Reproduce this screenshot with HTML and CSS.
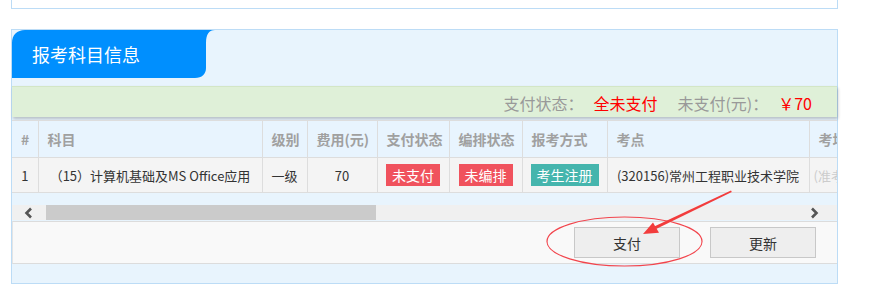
FILE: index.html
```html
<!DOCTYPE html>
<html lang="zh-CN">
<head>
  <meta charset="UTF-8">
  <title>报考科目信息</title>
  <link rel="stylesheet" href="styles.css">
</head>
<body>
  <div class="page">
    <div class="top-box"></div>

    <div class="panel">
      <div class="panel-head">
        <div class="tab">报考科目信息</div>
      </div>

      <div class="pay-bar">
        <span class="label">支付状态：</span>
        <span class="value">全未支付</span>
        <span class="label gap">未支付(元)：</span>
        <span class="value">￥70</span>
      </div>

      <div class="table-wrap">
        <table class="grid">
          <colgroup>
            <col style="width: 26px">
            <col style="width: 224px">
            <col style="width: 45px">
            <col style="width: 70px">
            <col style="width: 72px">
            <col style="width: 73px">
            <col style="width: 85px">
            <col style="width: 202px">
            <col style="width: 100px">
          </colgroup>
          <thead>
            <tr>
              <th>#</th>
              <th>科目</th>
              <th>级别</th>
              <th>费用(元)</th>
              <th>支付状态</th>
              <th>编排状态</th>
              <th>报考方式</th>
              <th>考点</th>
              <th>考场</th>
            </tr>
          </thead>
          <tbody>
            <tr>
              <td>1</td>
              <td>（15）计算机基础及MS Office应用</td>
              <td>一级</td>
              <td>70</td>
              <td><span class="badge red">未支付</span></td>
              <td><span class="badge red">未编排</span></td>
              <td><span class="badge teal">考生注册</span></td>
              <td>(320156)常州工程职业技术学院</td>
              <td class="muted">(准考证)</td>
            </tr>
          </tbody>
        </table>
      </div>

      <div class="scrollbar">
        <div class="arrow">
          <svg width="10" height="12" viewBox="0 0 10 12"><polyline points="7,1.5 2.5,6 7,10.5" fill="none" stroke="#555" stroke-width="2.6"/></svg>
        </div>
        <div class="thumb"></div>
        <div class="track"></div>
        <div class="arrow right">
          <svg width="10" height="12" viewBox="0 0 10 12"><polyline points="3,1.5 7.5,6 3,10.5" fill="none" stroke="#555" stroke-width="2.6"/></svg>
        </div>
      </div>

      <div class="actions">
        <button class="btn">支付</button>
        <button class="btn">更新</button>
      </div>
    </div>
  </div>

  <!-- 标注：圈出支付按钮 -->
  <svg class="mark" width="872" height="297" viewBox="0 0 872 297">
    <ellipse cx="624.5" cy="241.5" rx="77.5" ry="24.5" fill="none" stroke="#f2454d" stroke-width="1.2"/>
    <polygon points="731,190.6 731.8,192 654,230 652.6,227.2" fill="#f23c3c"/>
    <polygon points="643,234 653,222.5 659,232.8" fill="#f23c3c"/>
  </svg>
</body>
</html>
```

FILE: styles.css
```css
* {
  margin: 0;
  padding: 0;
  box-sizing: border-box;
}
body {
  background: #fff;
  font-family: "Noto Sans CJK SC", "Open Sans", sans-serif;
  color: #333;
  position: relative;
  width: 872px;
  height: 297px;
  overflow: hidden;
}
.page {
  width: 827px;
  margin-left: 11px;
}
.top-box {
  height: 9px;
  background: #fff;
  border: 1px solid #bcdcf6;
  border-top: 0;
}
.panel {
  margin-top: 20px;
  background: #e8f4fd;
  border: 1px solid #bcdcf6;
  height: 255px;
}
.panel-head {
  height: 48px;
}
.tab {
  width: 203px;
  height: 48px;
  background: #008ffe;
  color: #fff;
  font-size: 18px;
  line-height: 48px;
  padding-left: 20px;
  clip-path: path("M 13 0 L 203 0 C 197 0 194 4 194 13 L 194 38 C 194 44 190 48 183 48 L 0 48 L 0 13 C 0 5 5 0 13 0 Z");
}
.pay-bar {
  margin-top: 8px;
  height: 31px;
  background: #dff0d8;
  border-top: 1px solid #d3e6c6;
  box-shadow: 1px 2px 3px rgba(0, 0, 0, 0.22);
  display: flex;
  justify-content: flex-end;
  align-items: center;
  padding-right: 25px;
  padding-top: 2px;
  font-size: 16px;
}
.pay-bar .label {
  color: #999;
}
.pay-bar .value {
  color: #f00;
  margin-left: 10px;
}
.pay-bar .gap {
  margin-left: 20px;
}
.table-wrap {
  margin-top: 3px;
  width: 825px;
  overflow: hidden;
}
.grid {
  table-layout: fixed;
  width: 897px;
  border-collapse: collapse;
  font-size: 14px;
}
.grid th,
.grid td {
  border: 1px solid #ddd;
  white-space: nowrap;
  overflow: hidden;
}
.grid th:first-child,
.grid td:first-child {
  border-left: 0;
}
.grid th {
  height: 37px;
  background: #e8f4fe;
  color: #a0a0a0;
  font-weight: bold;
  text-align: left;
  padding-left: 9px;
}
.grid td {
  height: 35px;
  background: #f4f4f4;
  font-size: 13px;
  text-align: center;
  padding: 0 4px;
}
.grid td.muted {
  color: #ccc;
  text-align: left;
}
.badge {
  display: inline-block;
  color: #fff;
  line-height: 22px;
  padding: 0 6px;
  font-size: 14px;
}
.badge.red {
  background: #f0525d;
}
.badge.teal {
  background: #45b5ad;
}
.scrollbar {
  margin-top: 12px;
  height: 15px;
  display: flex;
  background: #f0f0f0;
}
.scrollbar .arrow {
  width: 34px;
  display: flex;
  align-items: center;
  justify-content: center;
}
.scrollbar .arrow.right {
  width: 46px;
}
.scrollbar .thumb {
  width: 330px;
  background: #cbcbcb;
}
.scrollbar .track {
  flex: 1;
}
.actions {
  margin-top: 1px;
  height: 43px;
  background: #f9f9f9;
  border-top: 1px solid #dcdcdc;
  border-bottom: 1px solid #dcdcdc;
  border-left: 1px solid #e4e4e4;
  display: flex;
  justify-content: flex-end;
  align-items: center;
  gap: 30px;
  padding-right: 21px;
}
.btn {
  width: 106px;
  height: 31px;
  background: #eee;
  border: 1px solid #c8c8c8;
  font-family: "Noto Sans CJK SC", sans-serif;
  font-size: 14px;
  color: #333;
}
.mark {
  position: absolute;
  top: 0;
  left: 0;
  pointer-events: none;
}
```
